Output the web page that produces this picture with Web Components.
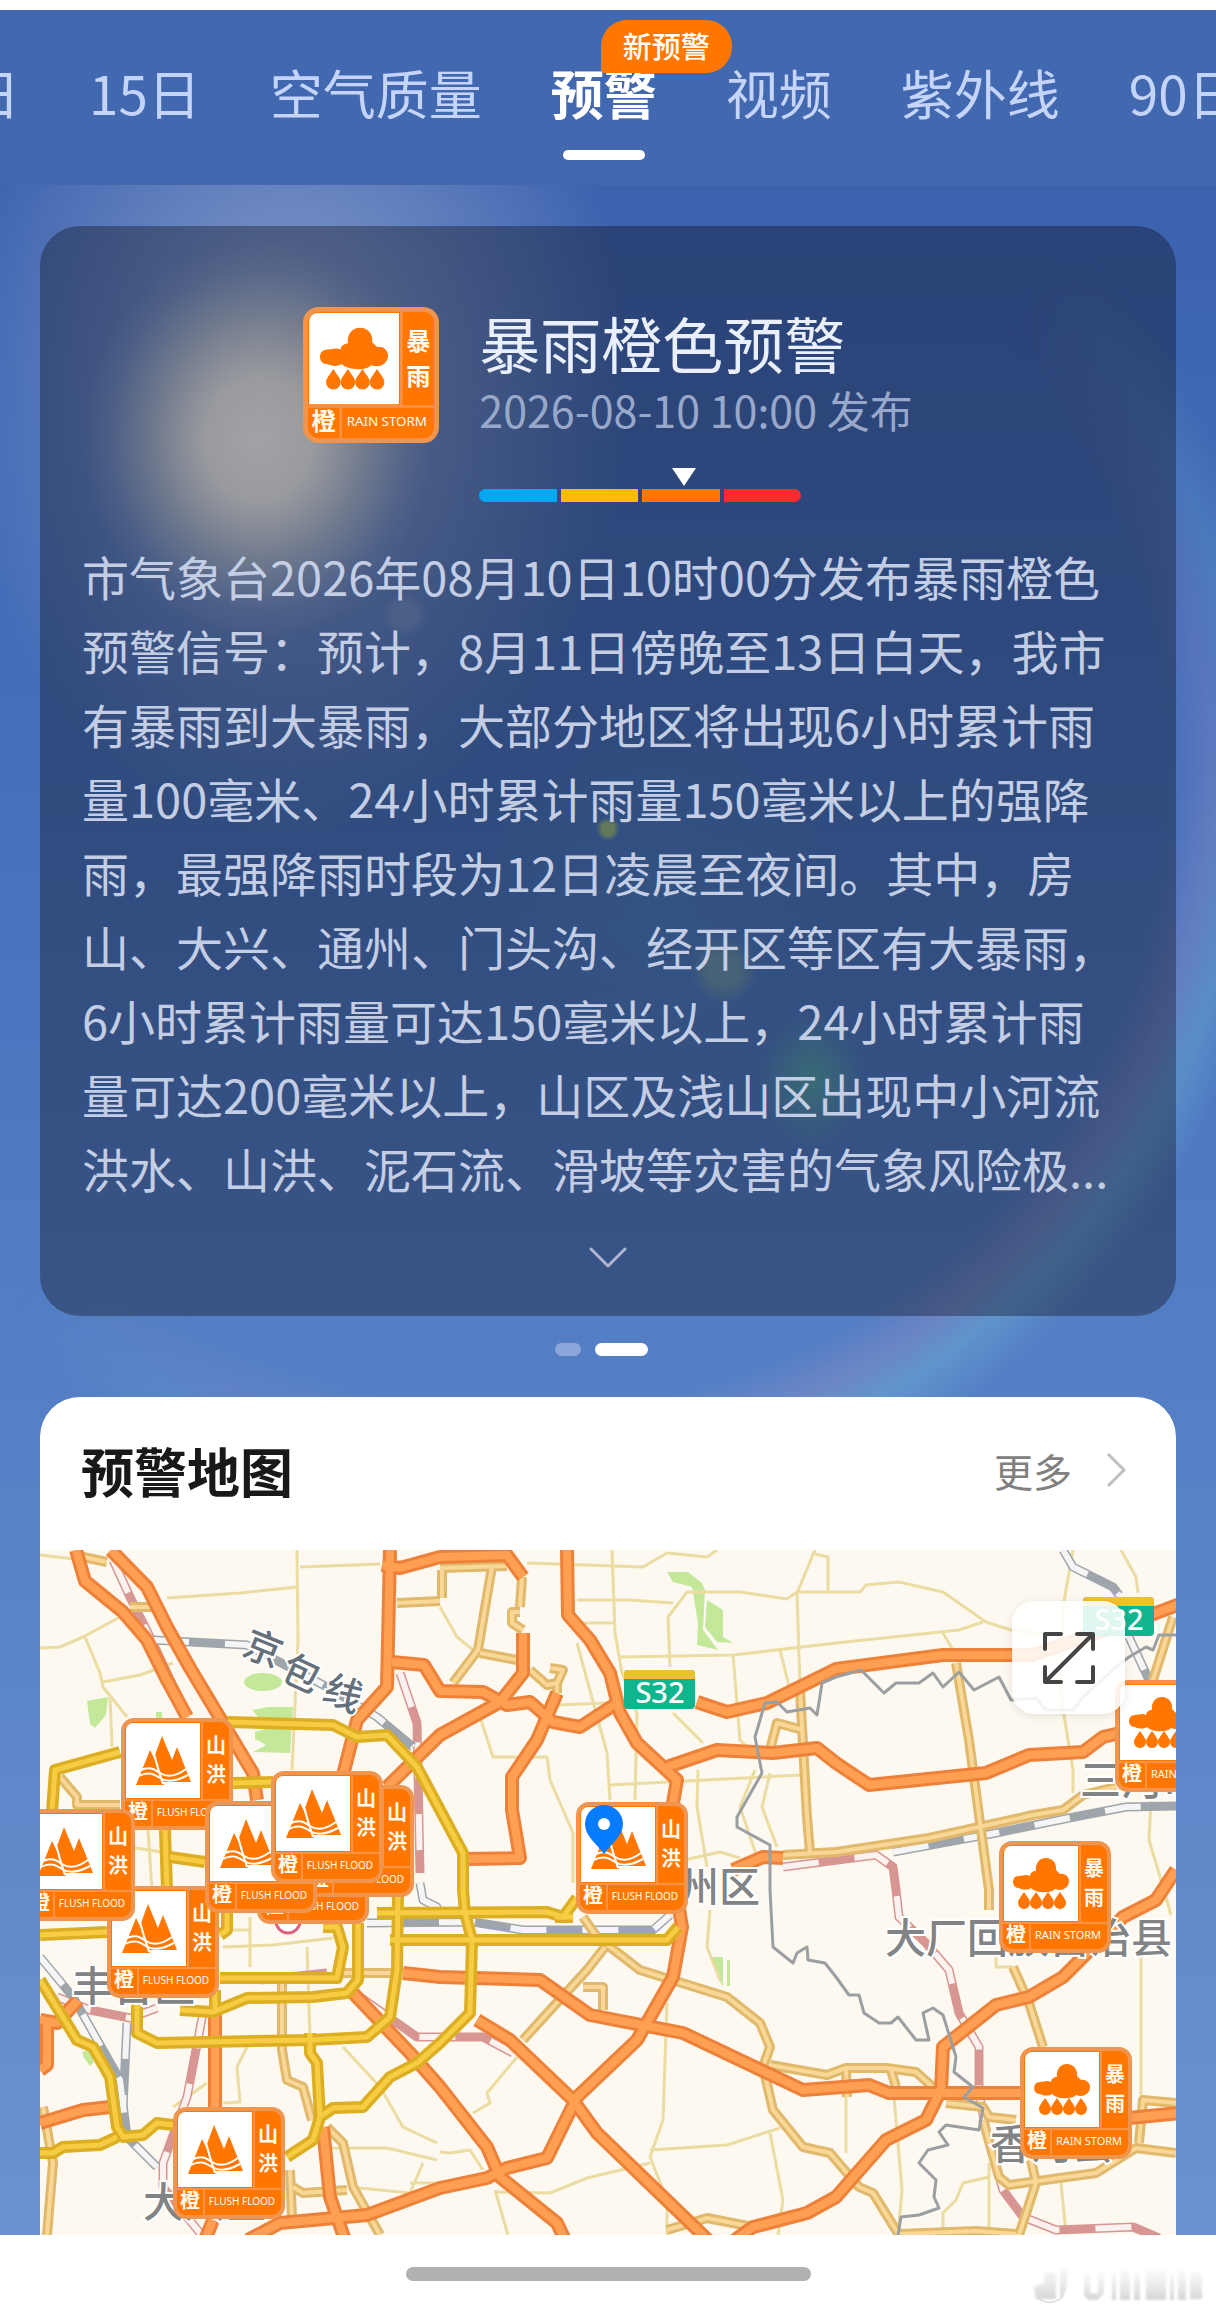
<!DOCTYPE html>
<html lang="zh-CN">
<head>
<meta charset="UTF-8">
<meta name="viewport" content="width=device-width, initial-scale=1">
<title>预警</title>
<style>
  body {
    margin: 0;
    background: #fff;
    font-family: "Noto Sans CJK SC", sans-serif;
  }
</style>
</head>
<body>
<weather-page>
  <weather-tabs slot="tabs">
    <weather-tab>日</weather-tab>
    <weather-tab>15日</weather-tab>
    <weather-tab>空气质量</weather-tab>
    <weather-tab active badge="新预警">预警</weather-tab>
    <weather-tab>视频</weather-tab>
    <weather-tab>紫外线</weather-tab>
    <weather-tab>90日</weather-tab>
  </weather-tabs>

  <alert-card>
    <warning-sign slot="sign" kind="rain"></warning-sign>
    <span slot="title">暴雨橙色预警</span>
    <span slot="time">2026-08-10 10:00 发布</span>
    市气象台2026年08月10日10时00分发布暴雨橙色预警信号：预计，8月11日傍晚至13日白天，我市有暴雨到大暴雨，大部分地区将出现6小时累计雨量100毫米、24小时累计雨量150毫米以上的强降雨，最强降雨时段为12日凌晨至夜间。其中，房山、大兴、通州、门头沟、经开区等区有大暴雨，6小时累计雨量可达150毫米以上，24小时累计雨量可达200毫米以上，山区及浅山区出现中小河流洪水、山洪、泥石流、滑坡等灾害的气象风险极...
  </alert-card>

  <page-dots></page-dots>

  <map-card>
    <span slot="title">预警地图</span>
    <span slot="more">更多</span>
    <alert-map></alert-map>
  </map-card>

  <home-bar slot="bottom"></home-bar>
</weather-page>

<script>
class WeatherPage extends HTMLElement {
  connectedCallback() {
    this.attachShadow({ mode: 'open' });
    this.shadowRoot.innerHTML = `
      <style>
        :host {
          display: block;
          padding-top: 10px;
          background: #fff;
        }
        main {
          position: relative;
          isolation: isolate;
          padding: 41px 40px 0;
          background:
            radial-gradient(circle at 608px 644px, rgba(200, 220, 90, 0.6) 0 6px, transparent 12px),
            radial-gradient(circle at 724px 785px, rgba(160, 190, 140, 0.35) 0 16px, transparent 34px),
            radial-gradient(ellipse 55px 70px at 812px 895px, rgba(90, 200, 150, 0.5), transparent),
            radial-gradient(circle at 405px 430px, rgba(190, 200, 220, 0.2) 0 12px, transparent 22px),
            radial-gradient(circle at 660px 720px, rgba(80, 160, 200, 0.2), transparent 180px),
            radial-gradient(ellipse 175px 200px at 258px 255px, rgba(250, 250, 250, 0.95), rgba(250, 248, 240, 0.85) 30%, rgba(245, 240, 225, 0.4) 62%, rgba(240, 240, 240, 0.1) 85%, transparent),
            radial-gradient(ellipse 340px 460px at 290px 190px, rgba(225, 228, 235, 0.45), rgba(225, 228, 240, 0.22) 50%, transparent),
            linear-gradient(#3c62ae, #4670bb 30%, #557fc5 58%, #6b92cf);
        }
        /* halo of the sun, strongest at the lower right */
        main::before {
          content: "";
          position: absolute;
          inset: 0 0 auto;
          z-index: -1;
          height: 1240px;
          background: radial-gradient(circle at 525px 586px, transparent 640px, rgba(200, 165, 205, 0.2) 685px, rgba(125, 205, 225, 0.28) 720px, transparent 770px);
          mask-image: linear-gradient(135deg, transparent 46%, #000 76%);
        }
      </style>
      <slot name="tabs"></slot>
      <main><slot></slot></main>
      <slot name="bottom"></slot>
    `;
  }
}

class WeatherTabs extends HTMLElement {
  connectedCallback() {
    this.attachShadow({ mode: 'open' });
    this.shadowRoot.innerHTML = `
      <style>
        :host {
          display: block;
          overflow: hidden;
          background: #4268b0;
        }
        /* scrolled so that the active tab sits near the middle */
        nav {
          display: flex;
          gap: 69px;
          margin-left: -33px;
          padding: 52px 0 25px;
        }
      </style>
      <nav><slot></slot></nav>
    `;
  }
}

class WeatherTab extends HTMLElement {
  connectedCallback() {
    const badge = this.getAttribute('badge');
    this.attachShadow({ mode: 'open' });
    this.shadowRoot.innerHTML = `
      <style>
        :host {
          display: block;
          flex: none;
        }
        button {
          position: relative;
          display: flex;
          flex-direction: column;
          align-items: center;
          gap: 28px;
          padding: 0;
          border: 0;
          background: none;
          color: #c4d4fa;
          font: inherit;
          font-size: 53px;
          line-height: 60px;
          white-space: nowrap;
          cursor: pointer;
        }
        :host([active]) button {
          color: #fff;
          font-weight: 700;
        }
        :host([active]) button::after {
          content: "";
          width: 82px;
          height: 10px;
          border-radius: 5px;
          background: #fff;
        }
        .badge {
          position: absolute;
          top: -42px;
          left: 50px;
          box-sizing: border-box;
          height: 53px;
          padding: 0 22px;
          border-radius: 26px 26px 26px 4px;
          background: #ff7700;
          color: #fff;
          font-size: 29px;
          font-weight: 500;
          line-height: 50px;
        }
      </style>
      <button type="button">
        <slot></slot>
        ${badge ? `<span class="badge">${badge}</span>` : ''}
      </button>
    `;
  }
}

const SYMBOLS = {
  rain: `
    <path fill="#ff7700" d="M20 35C12 35 12 47 20 47C24 49 29 49 32 47C36 52 52 53 56 48C64 51 70 46 70 40C70 35 65 32 61 33L57 29C58 22 53 17 47 17C40 17 36 23 37 30C34 30 31 32 31 35C27 33 24 35 20 35Z"/>
    <g fill="#ff7700">
      <path d="M25 51C29 57 31 59 31 62A6 6 0 0 1 19 62C19 59 21 57 25 51Z"/>
      <path d="M37 51C41 57 43 59 43 62A6 6 0 0 1 31 62C31 59 33 57 37 51Z"/>
      <path d="M49 51C53 57 55 59 55 62A6 6 0 0 1 43 62C43 59 45 57 49 51Z"/>
      <path d="M61 51C65 57 67 59 67 62A6 6 0 0 1 55 62C55 59 57 57 61 51Z"/>
    </g>`,
  flood: `
    <path fill="#ff7700" d="M15 67L29 32L34 42L37 54L43 67ZM41 18L34 37L41 64L70 64L56 29L51 42Z"/>
    <g fill="none" stroke="#fff" stroke-width="2">
      <path d="M33 36L37 50L42 66"/>
      <path d="M20 52C28 48 33 51 39 55S54 59 65 51"/>
      <path d="M18 58C27 53 33 56 39 60S54 64 67 57"/>
    </g>`
};

const SIGNS = {
  rain: { chars: ['暴', '雨'], latin: 'RAIN STORM', size: 11 },
  flood: { chars: ['山', '洪'], latin: 'FLUSH FLOOD', size: 10 }
};

class WarningSign extends HTMLElement {
  connectedCallback() {
    const kind = this.getAttribute('kind');
    const sign = SIGNS[kind];
    this.attachShadow({ mode: 'open' });
    this.shadowRoot.innerHTML = `
      <style>
        :host {
          display: block;
          width: 112px;
          height: 112px;
        }
        svg {
          display: block;
          width: 100%;
          height: 100%;
        }
        text {
          fill: #fffaf0;
          font-family: "Noto Sans CJK SC", sans-serif;
          text-anchor: middle;
        }
        .han {
          font-size: 20px;
          font-weight: 700;
        }
        .latin {
          font-family: "Noto Sans", sans-serif;
        }
      </style>
      <svg viewBox="0 0 112 112" role="img" aria-label="${sign.chars.join('')}">
        <rect width="112" height="112" rx="13" fill="#f0954f"/>
        <rect x="4" y="4" width="104" height="104" rx="9" fill="#ff7700"/>
        <path d="M81 4V81M4 82H108M31 82V108" stroke="#f89448" stroke-width="2" fill="none"/>
        <path d="M12 5H79V80H5V12A7 7 0 0 1 12 5Z" fill="#fff"/>
        ${SYMBOLS[kind]}
        <text class="han" x="95" y="35">${sign.chars[0]}</text>
        <text class="han" x="95" y="64">${sign.chars[1]}</text>
        <text class="han" x="17" y="101">橙</text>
        <text class="latin" x="69" y="98" font-size="${sign.size}">${sign.latin}</text>
      </svg>
    `;
  }
}

class LevelScale extends HTMLElement {
  connectedCallback() {
    this.attachShadow({ mode: 'open' });
    this.shadowRoot.innerHTML = `
      <style>
        :host {
          display: flex;
          gap: 4px;
          width: 322px;
        }
        i {
          position: relative;
          flex: 1;
          height: 13px;
        }
        .blue { background: #06a7ee; border-radius: 7px 0 0 7px; }
        .yellow { background: #fcbc05; }
        .orange { background: #ff7700; }
        .red { background: #fa2b2e; border-radius: 0 7px 7px 0; }
        .orange::before {
          content: "";
          position: absolute;
          left: 50%;
          bottom: 16px;
          margin-left: -9px;
          border: 12px solid transparent;
          border-top: 18px solid #fff;
          border-bottom: 0;
        }
      </style>
      <i class="blue"></i><i class="yellow"></i><i class="orange"></i><i class="red"></i>
    `;
  }
}

class AlertCard extends HTMLElement {
  connectedCallback() {
    this.attachShadow({ mode: 'open' });
    this.shadowRoot.innerHTML = `
      <style>
        :host {
          display: block;
          padding: 81px 42px 6px;
          border-radius: 40px;
          background: rgba(10, 10, 16, 0.35);
        }
        header {
          display: flex;
          justify-content: center;
          gap: 40px;
        }
        ::slotted(warning-sign) {
          width: 136px;
          height: 136px;
        }
        h1 {
          margin: 0 0 6px;
          color: #e9effd;
          font-size: 61px;
          font-weight: 400;
          line-height: 72px;
        }
        time {
          display: block;
          color: #98a8ca;
          font-size: 43px;
          line-height: 48px;
        }
        level-scale {
          margin-top: 56px;
        }
        p {
          margin: 37px 0 0;
          padding-right: 6px;
          color: #c3cde4;
          font-size: 47px;
          line-height: 74px;
        }
        button {
          display: flex;
          align-items: center;
          justify-content: center;
          width: 100%;
          height: 105px;
          padding: 0;
          border: 0;
          background: none;
          cursor: pointer;
        }
      </style>
      <header>
        <slot name="sign"></slot>
        <div>
          <h1><slot name="title"></slot></h1>
          <time datetime="2026-08-10T10:00"><slot name="time"></slot></time>
          <level-scale></level-scale>
        </div>
      </header>
      <p><slot></slot></p>
      <button type="button" aria-label="展开">
        <svg width="38" height="22" viewBox="0 0 38 22" fill="none" stroke="#a9b7d3" stroke-width="3" stroke-linecap="round" stroke-linejoin="round"><path d="M2 2L19 19L36 2"/></svg>
      </button>
    `;
  }
}

class PageDots extends HTMLElement {
  connectedCallback() {
    this.attachShadow({ mode: 'open' });
    this.shadowRoot.innerHTML = `
      <style>
        :host {
          display: flex;
          justify-content: center;
          gap: 14px;
          padding: 27px 13px 41px 0;
        }
        span {
          width: 26px;
          height: 13px;
          border-radius: 7px;
          background: #8da6dc;
        }
        .current {
          width: 53px;
          background: #fff;
        }
      </style>
      <span></span><span class="current"></span>
    `;
  }
}

class MapCard extends HTMLElement {
  connectedCallback() {
    this.attachShadow({ mode: 'open' });
    this.shadowRoot.innerHTML = `
      <style>
        :host {
          display: block;
          overflow: hidden;
          border-radius: 40px 40px 0 0;
          background: #fff;
        }
        header {
          display: flex;
          align-items: center;
          justify-content: space-between;
          height: 145px;
          padding: 0 50px 8px 41px;
        }
        h2 {
          margin: 0;
          color: #191919;
          font-size: 53px;
          font-weight: 700;
          line-height: 60px;
        }
        a {
          display: flex;
          align-items: center;
          gap: 34px;
          color: #808080;
          font-size: 39px;
          line-height: 48px;
          text-decoration: none;
        }
      </style>
      <header>
        <h2><slot name="title"></slot></h2>
        <a href="#map"><slot name="more"></slot>
          <svg width="20" height="36" viewBox="0 0 20 36" fill="none" stroke="#bdbdbd" stroke-width="3"><path d="M2 2L18 18L2 34"/></svg>
        </a>
      </header>
      <slot></slot>
    `;
  }
}

// Polylines on the 1136x685 map canvas, drawn in this order
const LINES = {
  minor: [
    '0,5 43,10', '0,98 20,97 43,87 80,67', '127,48 200,43 257,37', '257,0 258,90 252,220', '260,17 340,14',
    '45,87 60,123 63,137 87,167', '63,132 100,125 133,113', '70,147 72,197',
    '487,13 603,17 627,3 667,7 677,0', '572,0 575,83 582,123 597,163 595,250', '537,50 590,50 633,53', '543,73 573,73',
    '630,117 628,67 647,42 700,42 747,49 757,42 820,42 826,35 859,32 903,42 946,72 971,80 1000,84',
    '580,107 693,105 796,93 919,80 943,72', '693,105 700,190 713,203', '775,0 757,43 760,137', '775,4 788,7 788,42',
    '517,155 567,153', '537,93 567,203 570,250', '570,235 760,225', '658,220 657,257 667,317', '715,220 700,257 717,307',
    '730,223 722,257 737,297', '440,167 453,207 507,207 510,230 533,283 533,333', '740,100 750,140', '633,163 663,193',
    '400,57 417,87 437,103', '600,320 680,302 700,308', '670,360 667,397 680,430', '627,453 623,570 610,607 627,650 627,685',
    '610,600 687,595 740,578', '730,583 743,650 738,685', '457,642 510,643 547,628 610,613', '455,640 468,685',
    '477,507 447,543 450,553 433,563', '400,602 410,603 430,600 443,620', '183,397 233,395 293,388', '210,367 210,417',
    '267,397 270,487', '180,380 210,380', '207,497 197,517 200,552 183,553', '167,533 133,557',
    '303,497 340,537 363,577 397,593', '290,598 347,598 397,610', '383,613 370,643 310,637', '370,633 400,633',
    '95,298 122,302', '108,280 112,340', '1033,0 1023,57 1021,147 1033,220 1033,243', '1081,0 1096,27 1098,43',
    '1111,250 1109,290 1121,330 1131,365', '903,83 913,100', '1101,407 1101,547', '854,547 862,640 858,685',
    '949,613 949,683', '949,627 923,633 916,650 903,663 903,685', '1021,633 1026,683', '806,547 806,603', '956,407 956,417 973,417'
  ],
  pink: [
    '73,10 90,47 110,87 143,157', '360,123 377,173 380,323', '17,447 50,460 90,468 117,458',
    '163,463 147,547 123,613 123,637 160,683', '220,430 287,423', '320,447 377,487 443,487 473,503',
    '743,317 836,305 853,317 856,340 859,367 886,393 909,420 919,463 939,497 939,543 946,580 963,640 983,667 1016,680 1093,677 1119,688'
  ],
  rail: [
    '113,90 207,95 287,137 337,167 373,197', '327,373 433,372 483,380 613,380 630,365', '380,333 383,350 397,357 397,373',
    '0,407 33,447 80,530 87,587 117,617', '87,473 83,557', '1023,0 1033,17 1073,37 1079,45', '1089,87 1109,130',
    '853,302 956,283 1029,268 1086,257 1136,256'
  ],
  tan: [
    '20,227 37,247 37,255 80,255', '43,7 67,12', '90,57 113,57', '357,53 400,51', '400,18 467,16', '402,20 402,48',
    '452,17 448,40 438,100 413,133', '440,103 477,110', '482,27 480,57', '480,62 472,62 472,73 483,80',
    '490,120 507,135 517,133 523,120 510,118', '517,133 517,143', '730,200 737,173 763,180', '760,140 767,267 770,303',
    '743,305 796,302 889,288 993,265 1023,260 1043,245 1076,237', '916,113 929,190 949,340 949,360', '1133,67 1113,130',
    '973,417 989,453 1003,497', '730,515 787,525 806,518 846,518 876,522 896,540', '806,520 807,547', '851,520 856,537',
    '906,553 943,557 949,567 976,570', '943,570 959,627 969,635 1056,623 1096,598 1136,603', '991,610 996,633 979,685',
    '859,684 936,681 976,684', '1099,593 1103,550 1136,553',
    '543,367 557,387 600,420 687,447 720,473 730,497 723,517 733,560 763,597 790,603 819,637 833,643 859,685',
    '565,397 547,420 513,457 483,490', '543,437 563,437 563,460', '627,680 667,668 713,677', '300,423 353,423',
    '242,423 242,500 247,530 263,537 272,570', '287,577 303,593 313,637 340,685', '253,637 263,643 307,640',
    '250,620 252,668', '3,557 13,613 7,685'
  ],
  highway: [
    '36,0 45,31 83,62 107,90 127,130 147,167', '71,0 107,37 127,77 150,118 177,163 213,223 217,250',
    '350,0 347,137 317,170 303,225', '342,15 360,18 400,7 467,5 483,27',
    '352,112 384,115 400,141 443,142 467,155 490,152 513,172 540,177 577,153', '483,83 483,123 460,152 400,185 347,237',
    '517,143 497,190 472,227 472,260 480,308 427,309', '627,217 677,200 733,203 777,198 796,213 829,235 946,223 989,205 1043,202 1063,187 1080,183',
    '657,152 687,162 727,153 796,119 903,105 993,105 1036,90 1116,63 1140,54',
    '363,423 400,427 500,430 550,465 643,483 763,540 829,535 849,543 983,543 1089,568 1140,563',
    '313,443 370,503 400,537 447,597 460,627 517,673 525,690', '437,470 470,490 533,550 557,583 668,690',
    '175,463 175,560', '0,573 43,560 70,557', '0,470 17,473 38,450', '0,520 7,515 7,473', '283,577 290,647 305,690',
    '173,670 165,690', '693,320 723,307 743,308',
    '1136,320 1116,350 1083,367 1043,407 1023,427 989,447 956,455 903,497 901,540 886,570 846,590 796,647 767,663 713,677 695,690',
    '527,0 528,65 550,90 570,123 580,163 597,193 637,230 633,253 636,340 642,377 633,427 597,490 537,547 507,608 467,618 447,628 400,638 327,665 240,673 208,690'
  ],
  ring: [
    '12,262 15,220 80,202', '193,233 233,232', '125,280 127,340', '130,307 165,312', '0,385 67,382',
    '187,172 293,175 317,187 347,185 377,217 400,260 423,303 423,340 425,363 432,390 430,463 400,493 377,513 350,527 323,557 293,558 280,567 273,590 247,607',
    '358,345 357,420 350,467 327,487 270,490 117,493 97,483 97,453', '337,363 507,362 523,367 537,348', '515,367 533,367',
    '350,390 627,390 638,377', '180,385 187,380 187,355', '180,428 297,428 303,397 297,377 283,377',
    '318,373 318,430 307,443 273,447 207,448 173,462 140,460', '175,440 175,460',
    '0,430 37,490 53,497 70,527 77,577 83,587 103,585 117,573 133,575', '77,587 60,595 23,597 13,603 0,603',
    '270,483 270,503 277,513 280,567'
  ],
  border: [
    '796,127 782,133 777,165 770,158 747,162 737,152 725,153 715,187 722,223 697,267 697,277 730,295 730,340 733,397 753,413 757,403 767,397 768,410 785,413 796,427 809,445 819,445 824,463 839,473 851,473 858,467 876,490 889,490 883,463 893,458 903,465 916,507 914,522 933,537 924,547 943,558 939,580 906,575 899,582 908,595 888,600 879,613 896,630 894,647 899,658 879,665 861,667 858,685',
    '796,127 821,120 844,143 856,133 879,133 893,123 903,137 919,122 934,140 959,127 971,150 996,148 1006,160 1033,160 1043,147 1076,117 1089,107 1106,97 1113,100 1119,85 1136,85'
  ]
};

// Later signs lie over earlier ones
const MARKERS = [
  ['flood', 81, 168],
  ['flood', 67, 336],
  ['flood', 217, 262],
  ['flood', 262, 235],
  ['flood', 165, 251],
  ['flood', -17, 259],
  ['flood', 231, 221],
  ['flood', 133, 557],
  ['flood', 536, 252],
  ['rain', 959, 291],
  ['rain', 980, 497],
  ['rain', 1075, 130]
];

const drawLines = (kind) => {
  const draw = (cls) => LINES[kind].map((points) => `<polyline class="${cls}" points="${points}"/>`).join('');
  return kind === 'minor' || kind === 'border' ? draw(kind) : draw(`${kind} casing`) + draw(kind);
};

const shield = (x, y) => `
  <g transform="translate(${x} ${y})">
    <rect width="71" height="39" rx="4" fill="#10b58e"/>
    <path d="M0 9V4A4 4 0 0 1 4 0H67A4 4 0 0 1 71 4V9Z" fill="#f2c02e"/>
    <text class="road" x="36" y="33">S32</text>
  </g>`;

class AlertMap extends HTMLElement {
  connectedCallback() {
    this.attachShadow({ mode: 'open' });
    this.shadowRoot.innerHTML = `
      <style>
        :host {
          display: block;
          position: relative;
          overflow: hidden;
          background: #fdf9f0;
        }
        .canvas {
          display: block;
          width: 1136px;
          height: 685px;
        }
        polyline {
          fill: none;
          stroke-linejoin: round;
        }
        .minor { stroke: #ebdca2; stroke-width: 3; }
        .border { stroke: #9b9fa1; stroke-width: 3; }
        .tan { stroke: #f9d796; stroke-width: 4; }
        .tan.casing { stroke: #e0b96c; stroke-width: 10; }
        .highway { stroke: #ff9f51; stroke-width: 8; }
        .highway.casing { stroke: #ee8139; stroke-width: 14; }
        .ring { stroke: #f6cd42; stroke-width: 5; }
        .ring.casing { stroke: #dcae22; stroke-width: 12; }
        .rail { stroke: #f5f5f5; stroke-width: 6; stroke-dasharray: 36 36; }
        .rail.casing { stroke: #9ea6ac; stroke-width: 9; stroke-dasharray: none; }
        .pink { stroke: #fbf1ef; stroke-width: 6; stroke-dasharray: 36 36; }
        .pink.casing { stroke: #d89693; stroke-width: 9; stroke-dasharray: none; }
        text {
          font-family: "Noto Sans CJK SC", sans-serif;
          font-weight: 500;
          fill: #818385;
          stroke: #fff;
          stroke-width: 4px;
          paint-order: stroke;
        }
        .place { font-size: 41px; }
        .line {
          font-size: 38px;
          fill: #66707b;
          text-anchor: middle;
        }
        .road {
          font-family: "Noto Sans", sans-serif;
          font-size: 29px;
          fill: #fff;
          stroke: none;
          text-anchor: middle;
        }
        warning-sign, .pin, button {
          position: absolute;
        }
        .pin {
          left: 545px;
          top: 255px;
        }
        button {
          display: flex;
          align-items: center;
          justify-content: center;
          top: 51px;
          right: 51px;
          width: 113px;
          height: 113px;
          padding: 0;
          border: 0;
          border-radius: 22px;
          background: rgba(255, 255, 255, 0.87);
          box-shadow: 0 2px 10px rgba(0, 0, 0, 0.1);
          cursor: pointer;
        }
      </style>
      <svg class="canvas" viewBox="0 0 1136 685">
        <g fill="#c4e89a">
          <ellipse cx="223" cy="132" rx="19" ry="9"/>
          <path d="M212 160L228 157H253L250 203L213 202L226 195L215 189V182L228 178Z"/>
          <path d="M47 151L68 147L66 165L55 178L50 174Z"/>
          <path d="M116 162H122V168H116ZM42 502L50 500L54 512L50 516L44 508Z"/>
          <path d="M627 22H648L662 33L665 40L663 80L678 100L657 95L658 73L652 37L633 32Z"/>
          <path d="M667 50L683 60V87L693 93L677 92L665 77Z"/>
          <path d="M671 407H683V437L678 428ZM687 410H690V436H687Z"/>
        </g>
        ${['minor', 'pink', 'rail', 'tan', 'highway', 'ring', 'border'].map(drawLines).join('')}
        <circle cx="248" cy="371" r="12" fill="#fff" stroke="#e0607a" stroke-width="3"/>
        <text class="line" transform="translate(223 99) rotate(22)" y="13">京</text>
        <text class="line" transform="translate(261 124) rotate(25)" y="13">包</text>
        <text class="line" transform="translate(303 144) rotate(22)" y="13">线</text>
        <text class="place" x="32" y="451">丰台区</text>
        <text class="place" x="103" y="667">大兴区</text>
        <text class="place" x="597" y="352">通州区</text>
        <text class="place" x="1040" y="245">三河市</text>
        <text class="place" x="845" y="403">大厂回族自治县</text>
        <text class="place" x="950" y="609">香河县</text>
        ${shield(584, 120)}
        ${shield(1043, 47)}
      </svg>
      ${MARKERS.map(([kind, x, y]) => `<warning-sign kind="${kind}" style="left: ${x}px; top: ${y}px"></warning-sign>`).join('')}
      <svg class="pin" width="38" height="50" viewBox="0 0 38 50">
        <path fill="#067bfd" d="M19 0A19 19 0 0 1 38 19C38 31 27 38 19 49C11 38 0 31 0 19A19 19 0 0 1 19 0Z"/>
        <circle cx="19" cy="19" r="6" fill="#fff"/>
      </svg>
      <button type="button" aria-label="全屏">
        <svg width="54" height="54" viewBox="0 0 54 54" fill="none" stroke="#444" stroke-width="4" stroke-linecap="round" stroke-linejoin="round">
          <path d="M3 18V3H19M35 3H51V18M51 36V51H35M19 51H3V36M5 49L49 5"/>
        </svg>
      </button>
    `;
  }
}

class HomeBar extends HTMLElement {
  connectedCallback() {
    this.attachShadow({ mode: 'open' });
    this.shadowRoot.innerHTML = `
      <style>
        :host {
          display: flex;
          position: relative;
          justify-content: center;
          padding: 32px 0;
          background: #fff;
        }
        .handle {
          width: 405px;
          height: 14px;
          border-radius: 7px;
          background: #b1b1b1;
        }
        .mark {
          position: absolute;
          right: 10px;
          bottom: 10px;
        }
      </style>
      <div class="handle"></div>
      <svg class="mark" width="174" height="38" viewBox="0 0 174 38" aria-hidden="true">
        <defs>
          <linearGradient id="fade" x2="0" y2="1">
            <stop offset="0" stop-color="#ccc" stop-opacity="0.1"/>
            <stop offset="1" stop-color="#bbb" stop-opacity="0.6"/>
          </linearGradient>
          <filter id="soft"><feGaussianBlur stdDeviation="1"/></filter>
        </defs>
        <g fill="url(#fade)" filter="url(#soft)">
          <path d="M2 22L12 18V34H4ZM12 8H24V34H12ZM28 2H36L34 26L28 34Z"/>
          <path d="M52 8H58V28H66V8H72V28L66 35H56L52 30Z"/>
          <path d="M80 8H84V35H80ZM88 6H98V35H88ZM102 8H108V35H102ZM114 6H134V35H114ZM138 8H142V35H138ZM146 6H154V35H146ZM158 8H170V34H158Z"/>
        </g>
        <path d="M6 33C14 40 26 38 32 30" fill="none" stroke="#ccc"/>
      </svg>
    `;
  }
}

customElements.define('weather-page', WeatherPage);
customElements.define('weather-tabs', WeatherTabs);
customElements.define('weather-tab', WeatherTab);
customElements.define('warning-sign', WarningSign);
customElements.define('level-scale', LevelScale);
customElements.define('alert-card', AlertCard);
customElements.define('page-dots', PageDots);
customElements.define('map-card', MapCard);
customElements.define('alert-map', AlertMap);
customElements.define('home-bar', HomeBar);
</script>
</body>
</html>
